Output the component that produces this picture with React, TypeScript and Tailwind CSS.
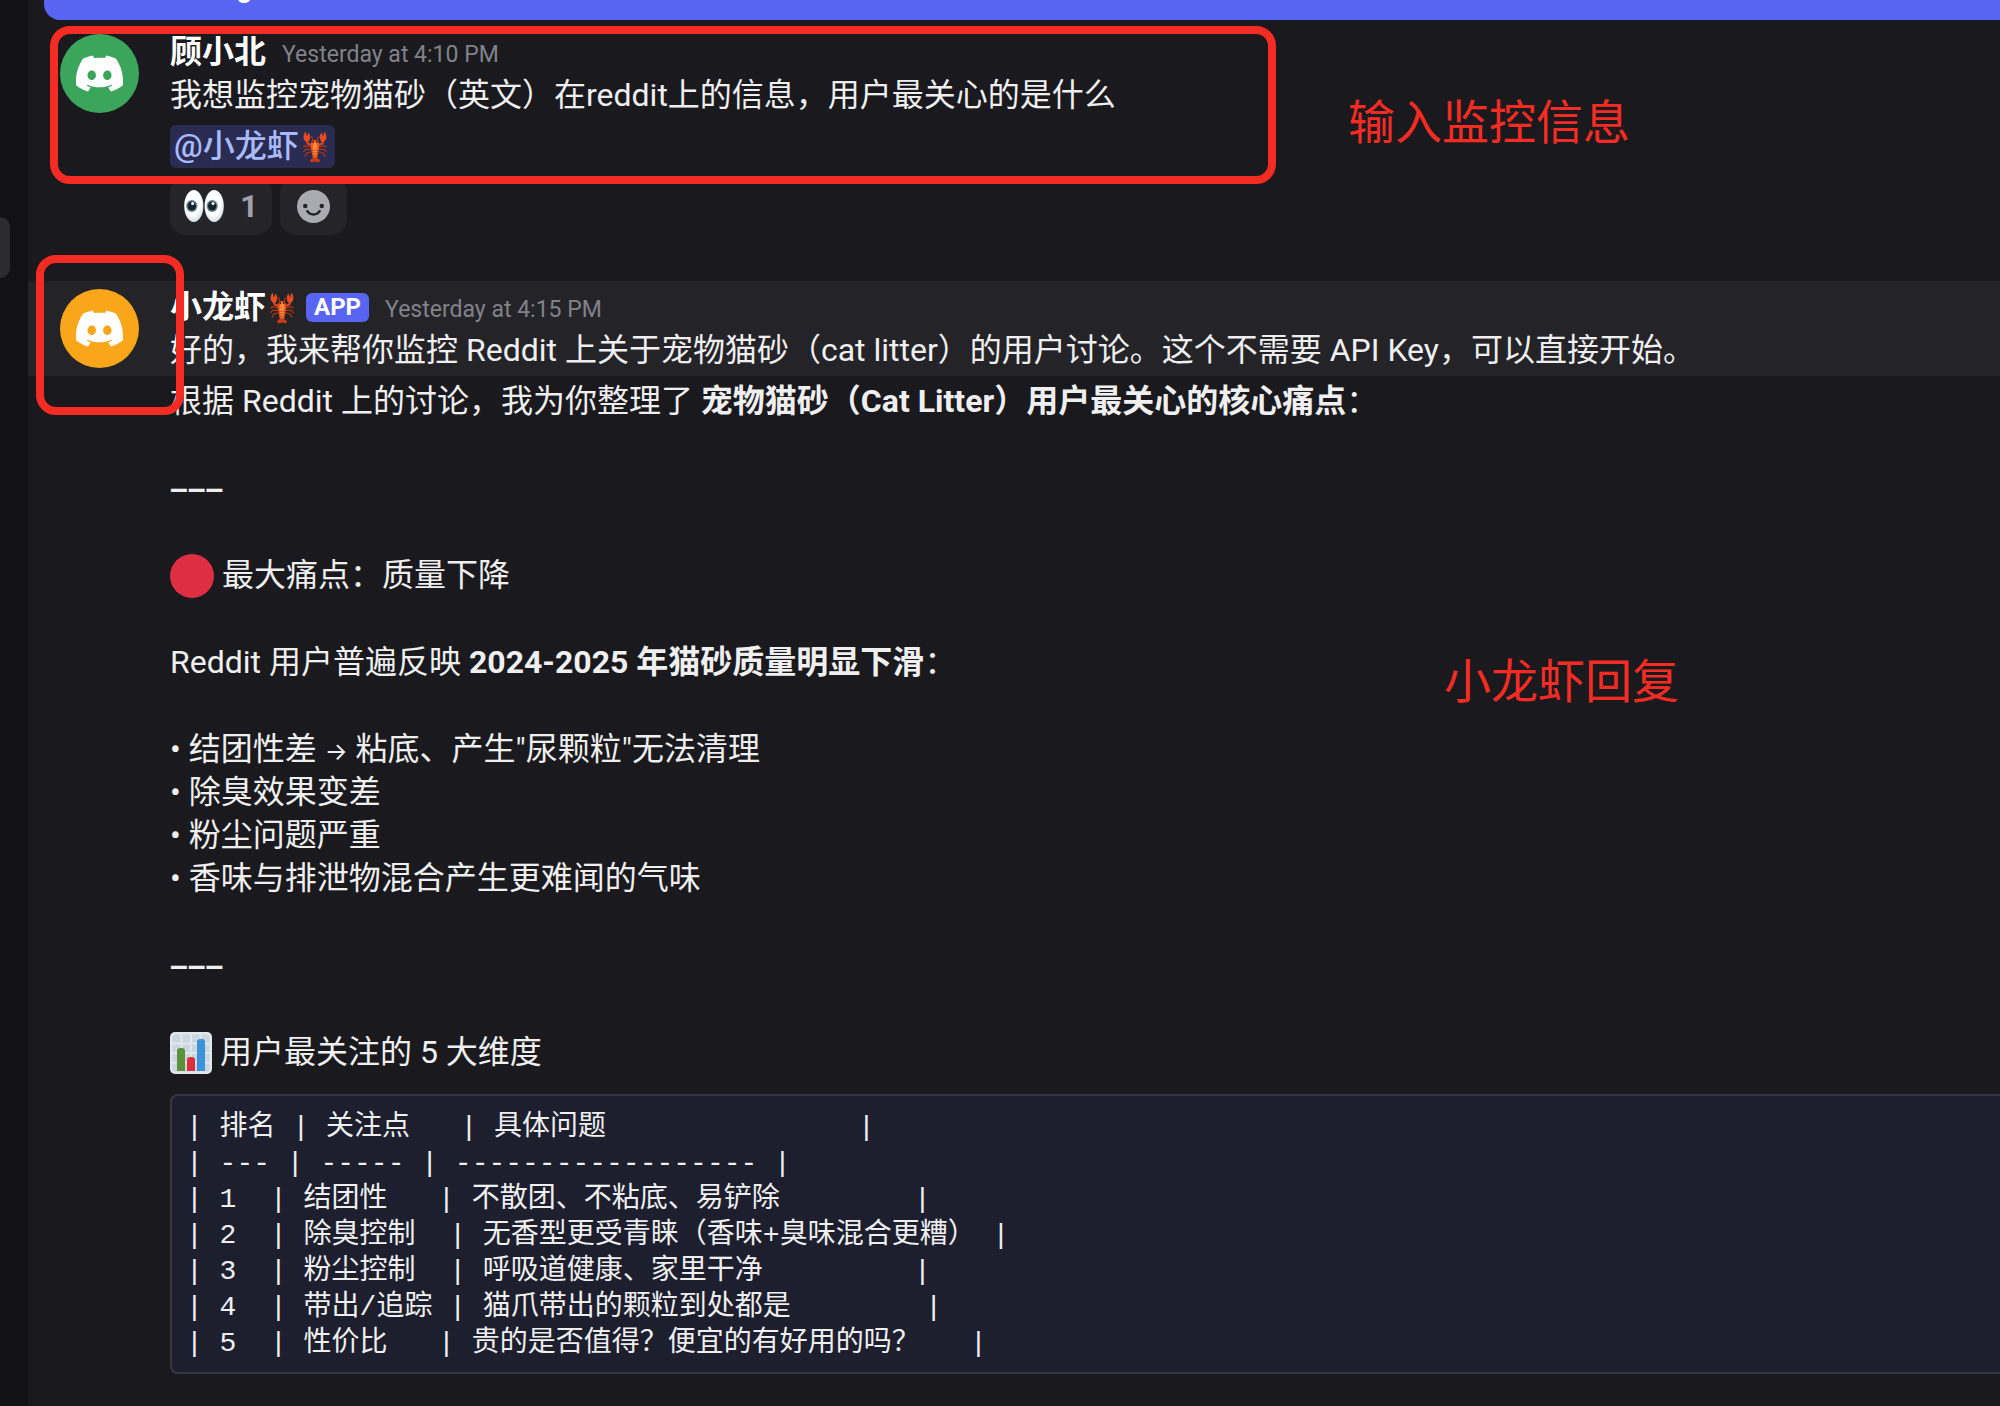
import type { ReactNode } from "react";
import { SiDiscord } from "react-icons/si";

const TABLE_TEXT = [
  "| 排名 | 关注点   | 具体问题               |",
  "| --- | ----- | ------------------ |",
  "| 1  | 结团性   | 不散团、不粘底、易铲除        |",
  "| 2  | 除臭控制  | 无香型更受青睐（香味+臭味混合更糟） |",
  "| 3  | 粉尘控制  | 呼吸道健康、家里干净         |",
  "| 4  | 带出/追踪 | 猫爪带出的颗粒到处都是        |",
  "| 5  | 性价比   | 贵的是否值得？便宜的有好用的吗？   |",
].join("\n");

const BULLETS = ["除臭效果变差", "粉尘问题严重", "香味与排泄物混合产生更难闻的气味"];

function Lobster() {
  return (
    <svg viewBox="0 0 28 34" className="h-8 w-8 shrink-0" role="img" aria-label="lobster">
      <g fill="none" stroke="#b8330f" strokeWidth="1.2" strokeLinecap="round">
        <path d="M12 12C11 9 11.500 8 10.500 6M16 12c1-3 .5-4 1.500-6" />
        <path d="M10 17 4 15.500 2 17M10 19.500 4 19.500 2 22M10.500 22 5 23.500 3.500 27M18 17l6-1.500L26 17M18 19.500h6l2 2.500M17.500 22l5.500 1.500 1.500 3.500" />
      </g>
      <g fill="none" stroke="#d9431a" strokeWidth="2.400" strokeLinecap="round" strokeLinejoin="round">
        <path d="M11 15 6.500 13.500 5 10M17 15l4.500-1.500L23 10" />
      </g>
      <path d="M5.800 12C1.200 10.500.6 5 4 .8c.8 1.500 1 3 .9 4.800C6 4.500 6.800 3.200 7 1.600c3 3.400 2.600 8.400-1.200 10.400Z" fill="#ea4a1f" />
      <path d="M22.200 12c4.600-1.500 5.200-7 1.800-11.200-.8 1.500-1 3-.9 4.800-1.100-1.100-1.900-2.400-2.100-4-3 3.400-2.600 8.400 1.200 10.400Z" fill="#ea4a1f" />
      <path d="M14 9.500c2.900 0 4.600 2.400 4.600 5.600 0 3-1 5.200-1.300 8.200-.2 2-.6 4-1.200 5.700h-4.200c-.6-1.700-1-3.700-1.200-5.700-.3-3-1.300-5.200-1.300-8.200 0-3.200 1.700-5.600 4.600-5.600Z" fill="#e8541c" />
      <path d="M14 11c1.700 0 2.400 3 2.400 7s-.7 9-2.400 9-2.400-5-2.400-9 .7-7 2.400-7Z" fill="#ff8a3d" />
      <path d="M11 20.500h6M11.200 23h5.600M11.600 25.500h4.800" stroke="#c4421a" strokeWidth="0.8" />
      <circle cx="12.200" cy="11.600" r="0.900" fill="#3a1208" />
      <circle cx="15.800" cy="11.600" r="0.900" fill="#3a1208" />
      <path d="M12 28.500 8.500 31l1.500 2.400 4-1 4 1 1.500-2.400-3.500-2.500Z" fill="#c93a12" />
    </svg>
  );
}

function Eyes() {
  return (
    <svg viewBox="0 0 40 32" className="h-8 w-10" aria-hidden="true">
      <defs>
        <radialGradient id="eyeball" cx="0.45" cy="0.4" r="0.65">
          <stop offset="0.6" stopColor="#fdfeff" />
          <stop offset="1" stopColor="#c9d5de" />
        </radialGradient>
      </defs>
      <ellipse cx="9.800" cy="16" rx="9.600" ry="16" fill="url(#eyeball)" />
      <ellipse cx="30.200" cy="16" rx="9.600" ry="16" fill="url(#eyeball)" />
      <ellipse cx="7.800" cy="16" rx="5.600" ry="6" fill="#6b8494" />
      <ellipse cx="28.200" cy="16" rx="5.600" ry="6" fill="#6b8494" />
      <ellipse cx="7.800" cy="16" rx="4.200" ry="4.600" fill="#17232c" />
      <ellipse cx="28.200" cy="16" rx="4.200" ry="4.600" fill="#17232c" />
      <circle cx="8.600" cy="13.600" r="1.500" fill="#fff" />
      <circle cx="29" cy="13.600" r="1.500" fill="#fff" />
    </svg>
  );
}

function Smile() {
  return (
    <svg viewBox="0 0 32 32" className="h-[33px] w-[33px]" aria-hidden="true">
      <circle cx="16" cy="16" r="16" fill="#aaaab1" />
      <circle cx="8" cy="15.500" r="2.200" fill="#242429" />
      <circle cx="24" cy="15.500" r="2.200" fill="#242429" />
      <path d="M10 20.500c3 4.300 9 4.300 12 0" fill="none" stroke="#242429" strokeWidth="2.400" strokeLinecap="round" />
    </svg>
  );
}

function BarChart() {
  return (
    <svg viewBox="0 0 42 42" className="h-[42px] w-[42px] shrink-0" aria-hidden="true">
      <rect width="42" height="42" rx="5" fill="#e1e8ed" />
      <rect x="2.400" y="2.400" width="37.200" height="37.200" rx="3" fill="#ccd6dd" />
      <path d="M11.500 2v38M21 2v38M30.500 2v38M2 11.500h38M2 21h38M2 30.500h38" stroke="#e1e8ed" strokeWidth="2" />
      <path d="M7 39V19a3 3 0 0 1 3-3h2a3 3 0 0 1 3 3v20Z" fill="#5c913b" />
      <path d="M17 39V28a3 3 0 0 1 3-3h2a3 3 0 0 1 3 3v11Z" fill="#dd2e44" />
      <path d="M27 39V10a3 3 0 0 1 3-3h2a3 3 0 0 1 3 3v29Z" fill="#3b94d9" />
    </svg>
  );
}

function Avatar({ className }: { className: string }) {
  return (
    <div className={`mt-[3px] mr-[31px] flex h-[79px] w-[79px] shrink-0 items-center justify-center rounded-full text-white ${className}`}>
      <SiDiscord size={47} />
    </div>
  );
}

function Divider() {
  return <p className="font-['Liberation_Sans',sans-serif] font-bold">–––</p>;
}

function Heading({ icon, children }: { icon: ReactNode; children: ReactNode }) {
  return (
    <p className="flex h-[43px] items-center gap-2">
      {icon}
      {children}
    </p>
  );
}

export default function App() {
  return (
    <div
      lang="zh-CN"
      className="relative flex min-h-screen overflow-hidden bg-[#1a1a1e] font-[Roboto,'Noto_Sans_CJK_SC',sans-serif] text-[32px] leading-[43px] text-[#efeff0]"
    >
      <aside className="w-7 shrink-0 bg-[#121214] pt-[217px]">
        <div className="h-[61px] w-[10px] rounded-r-[10px] bg-[#2c2c30]" />
      </aside>

      <main className="min-w-0 flex-1">
        <button
          type="button"
          className="ml-4 flex h-5 w-[calc(100%-16px)] items-end overflow-hidden rounded-bl-2xl bg-[#5865f2] pb-4 pl-3 text-[28px] font-semibold leading-8 text-white"
        >
          20 new messages
        </button>

        <article className="flex pt-[11px] pl-8">
          <Avatar className="bg-[#3ba55c]" />
          <div>
            <header className="flex items-center gap-4">
              <h3 className="font-semibold text-white">顾小北</h3>
              <time className="pt-1 text-[23px] leading-[39px] text-[#81828a]">Yesterday at 4:10 PM</time>
            </header>
            <p>我想监控宠物猫砂（英文）在reddit上的信息，用户最关心的是什么</p>
            <p className="mt-2">
              <a href="#bot" className="inline-flex h-[43px] items-center rounded-md bg-[#292b51] px-1 font-medium text-[#a9bbff]">
                @小龙虾
                <Lobster />
              </a>
            </p>
            <div className="mt-[9px] flex gap-2">
              <button
                type="button"
                className="flex h-[58px] items-center gap-4 rounded-2xl bg-[#242429] px-[14px] font-bold text-[#a0a0a8]"
              >
                <Eyes />1
              </button>
              <button type="button" aria-label="Add reaction" className="flex h-[58px] w-[67px] items-center justify-center rounded-2xl bg-[#242429]">
                <Smile />
              </button>
            </div>
          </div>
        </article>

        <article id="bot" className="mt-[46px] flex bg-[#242428] pt-[5px] pb-1 pl-8">
          <Avatar className="bg-[#faa61a]" />
          <div>
            <header className="flex items-center">
              <h3 className="flex items-center font-semibold text-white">
                小龙虾
                <Lobster />
              </h3>
              <span className="ml-2 rounded-md bg-[#5865f2] px-2 text-2xl leading-[29px] font-bold text-white">APP</span>
              <time className="ml-4 pt-1 text-[23px] leading-[39px] text-[#81828a]">Yesterday at 4:15 PM</time>
            </header>
            <p>好的，我来帮你监控 Reddit 上关于宠物猫砂（cat litter）的用户讨论。这个不需要 API Key，可以直接开始。</p>
          </div>
        </article>

        <article className="flex flex-col gap-11 pt-1 pl-[142px]">
          <p>
            根据 Reddit 上的讨论，我为你整理了 <strong>宠物猫砂（Cat Litter）用户最关心的核心痛点</strong>：
          </p>
          <Divider />
          <Heading icon={<span className="h-11 w-11 shrink-0 rounded-full bg-[#dd2e44]" />}>最大痛点：质量下降</Heading>
          <p>
            Reddit 用户普遍反映 <strong>2024-2025 年猫砂质量明显下滑</strong>：
          </p>
          <ul>
            <li>
              • 结团性差 <span className="font-[Inter] text-2xl leading-5">→</span> 粘底、产生"尿颗粒"无法清理
            </li>
            {BULLETS.map((text) => (
              <li key={text}>• {text}</li>
            ))}
          </ul>
          <Divider />
          <Heading icon={<BarChart />}>用户最关注的 5 大维度</Heading>
        </article>

        <pre className="mt-5 ml-[142px] overflow-hidden rounded-l-lg border-2 border-r-0 border-[#363741] bg-[#1e1f2e] pt-[14px] pb-[10px] pl-[14px] font-['Liberation_Mono','Noto_Sans_CJK_SC',monospace] text-[28px] leading-9">
          {TABLE_TEXT}
        </pre>
      </main>

      {/* marker annotations over the chat */}
      <div className="absolute top-[26px] left-[50px] h-[158px] w-[1226px] rounded-[20px] border-8 border-[#f42c24]" />
      <div className="absolute top-[255px] left-9 h-[160px] w-[148px] rounded-[20px] border-8 border-[#f42c24]" />
      <p className="absolute top-[99px] left-[1348px] text-[47px] leading-[48px] text-[#f42c24]">输入监控信息</p>
      <p className="absolute top-[658px] left-[1444px] text-[47px] leading-[48px] text-[#f42c24]">小龙虾回复</p>
    </div>
  );
}
